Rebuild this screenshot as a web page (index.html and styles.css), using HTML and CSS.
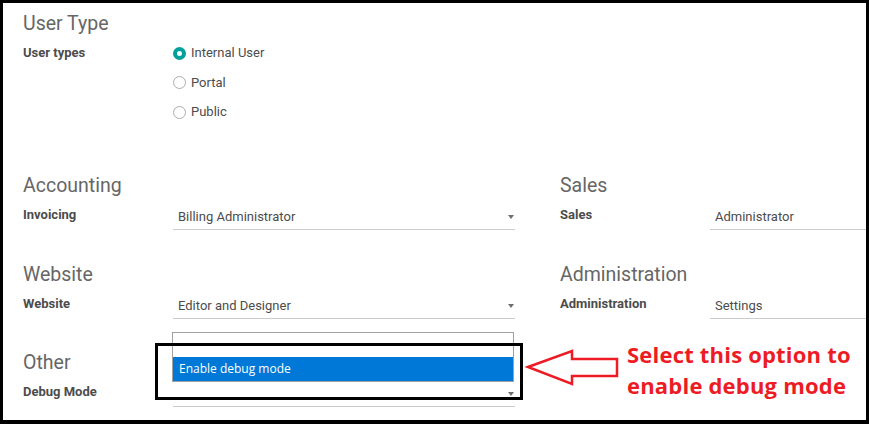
FILE: index.html
```html
<!DOCTYPE html>
<html>
<head>
<meta charset="utf-8">
<link rel="stylesheet" href="styles.css">
</head>
<body>
<div class="frame">
  <section class="usertype">
    <h2 class="sep">User Type</h2>
    <div class="ut-row">
      <div class="label">User types</div>
      <div class="radios">
        <div class="radio"><span class="circle checked"></span>Internal User</div>
        <div class="radio"><span class="circle"></span>Portal</div>
        <div class="radio"><span class="circle"></span>Public</div>
      </div>
    </div>
  </section>

  <div class="groups">
    <div class="group">
      <h2 class="sep">Accounting</h2>
      <div class="field-row">
        <div class="label">Invoicing</div>
        <div class="field">Billing Administrator<span class="caret"></span></div>
      </div>
    </div>
    <div class="group">
      <h2 class="sep">Sales</h2>
      <div class="field-row">
        <div class="label">Sales</div>
        <div class="field">Administrator<span class="caret"></span></div>
      </div>
    </div>
    <div class="group">
      <h2 class="sep">Website</h2>
      <div class="field-row">
        <div class="label">Website</div>
        <div class="field">Editor and Designer<span class="caret"></span></div>
      </div>
    </div>
    <div class="group">
      <h2 class="sep">Administration</h2>
      <div class="field-row">
        <div class="label">Administration</div>
        <div class="field">Settings<span class="caret"></span></div>
      </div>
    </div>
    <div class="group">
      <h2 class="sep">Other</h2>
      <div class="field-row">
        <div class="label">Debug Mode</div>
        <div class="field empty"><span class="caret"></span>
          <div class="popup">
            <div class="opt"></div>
            <div class="opt selected">Enable debug mode</div>
          </div>
        </div>
      </div>
    </div>
  </div>

  <div class="highlight-box"></div>
  <svg class="arrow" width="100" height="42" viewBox="0 0 100 42">
    <polygon points="4,20 48,4 48,12 93,12 93,29 48,29 48,37" fill="none" stroke="#ed1c24" stroke-width="2.5" stroke-linejoin="miter"/>
  </svg>
  <div class="note">Select this option to<br>enable debug mode</div>
</div>
</body>
</html>
```
FILE: styles.css
```css
html, body {
  margin: 0;
  padding: 0;
  background: #fff;
}

.frame {
  position: relative;
  width: 869px;
  height: 424px;
  box-sizing: border-box;
  border: 3px solid #000;
  border-bottom-width: 4px;
  padding: 9px 0 0 20px;
  overflow: hidden;
  background: #fff;
  font-family: Roboto, "Liberation Sans", sans-serif;
  font-size: 13px;
  color: #4c4c4c;
}

.sep {
  margin: 0;
  font-size: 19.5px;
  font-weight: 400;
  line-height: 24px;
  color: #666;
}

.label {
  font-weight: 700;
  font-size: 13px;
  line-height: 20px;
  color: #4c4c4c;
}

.ut-row {
  display: grid;
  grid-template-columns: 150px 1fr;
  margin-top: 7px;
}

.radios {
  display: grid;
  grid-auto-rows: 20px;
  row-gap: 9.5px;
}

.radio {
  display: flex;
  align-items: center;
  gap: 5px;
  line-height: 20px;
  color: #4c4c4c;
}

.circle {
  width: 11px;
  height: 11px;
  border: 1px solid #adadad;
  border-radius: 50%;
  background: #fff;
  box-sizing: content-box;
}

.circle.checked {
  width: 5px;
  height: 5px;
  border: 4px solid #00a09d;
  background: #fff;
}

.groups {
  display: grid;
  grid-template-columns: 492px 350px;
  column-gap: 45px;
  margin-top: 52px;
}

.group {
  height: 88.5px;
}

.field-row {
  display: grid;
  grid-template-columns: 150px 1fr;
  margin-top: 6px;
}

.field-row .label {
  padding-top: 1px;
}

.field {
  position: relative;
  height: 20px;
  padding: 3px 20px 2px 5px;
  line-height: 20px;
  border-bottom: 1px solid #ccc;
  color: #4c4c4c;
  white-space: nowrap;
}

.caret {
  position: absolute;
  right: 1px;
  top: 11px;
  width: 0;
  height: 0;
  border-left: 3px solid transparent;
  border-right: 3px solid transparent;
  border-top: 4px solid #6f6f6f;
}

.popup {
  position: absolute;
  top: -49px;
  left: -1px;
  right: 1px;
  border: 1px solid #a0a0a0;
  background: #fff;
  z-index: 2;
}

.opt {
  height: 24px;
  line-height: 24px;
  padding-left: 6px;
  font-family: "Open Sans", "Noto Sans", sans-serif;
  font-size: 12px;
}

.opt.selected {
  background: #0078d7;
  color: #fff;
}

.highlight-box {
  position: absolute;
  left: 152px;
  top: 340px;
  width: 368px;
  height: 57px;
  box-sizing: border-box;
  border: 3px solid #000;
  z-index: 3;
}

.arrow {
  position: absolute;
  left: 521px;
  top: 344px;
  z-index: 3;
}

.note {
  position: absolute;
  left: 624px;
  top: 336px;
  font-family: "Open Sans", Lato, sans-serif;
  font-weight: 700;
  font-size: 22px;
  letter-spacing: 0.2px;
  line-height: 31px;
  color: #ed1c24;
  white-space: nowrap;
  z-index: 3;
}
```
